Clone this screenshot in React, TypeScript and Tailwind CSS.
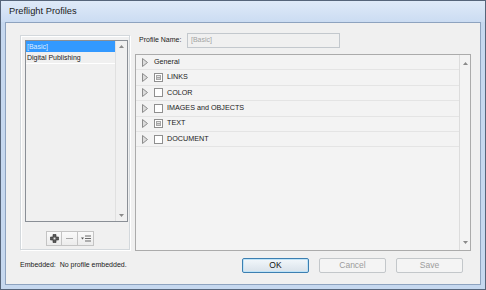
import React from 'react';

function Tri() {
  return (
    <svg width="6" height="9" viewBox="0 0 6 9" className="shrink-0">
      <polygon points="0.5,0.5 5.5,4.5 0.5,8.5" fill="#dcdcdc" stroke="#8c8c8c" strokeWidth="1" />
    </svg>
  );
}

function Check({ mixed }: { mixed: boolean }) {
  return (
    <span className="w-[9px] h-[9px] border border-[#8f8f8f] bg-white shrink-0 flex items-center justify-center">
      {mixed && (
        <svg width="5" height="5" viewBox="0 0 5 5">
          <rect x="0" y="0" width="5" height="5" fill="#a6a6a6" />
          <rect x="1" y="1" width="3" height="1" fill="#e6e6e6" />
          <rect x="1" y="3" width="3" height="1" fill="#d0d0d0" />
        </svg>
      )}
    </span>
  );
}

function Arrow({ up }: { up: boolean }) {
  return (
    <svg width="5" height="3" viewBox="0 0 5 3">
      <polygon points={up ? '0,3 2.5,0 5,3' : '0,0 2.5,3 5,0'} fill="#8a8a8a" />
    </svg>
  );
}

export default function App() {
  const rows: { label: string; cb: null | 'mixed' | 'empty' }[] = [
    { label: 'General', cb: null },
    { label: 'LINKS', cb: 'mixed' },
    { label: 'COLOR', cb: 'empty' },
    { label: 'IMAGES and OBJECTS', cb: 'empty' },
    { label: 'TEXT', cb: 'mixed' },
    { label: 'DOCUMENT', cb: 'empty' },
  ];
  return (
    <div className="w-[486px] h-[290px] bg-[#c6d8ef] border border-[#56657a] flex flex-col overflow-hidden font-['Liberation_Sans',Arial,sans-serif] text-[#1a1a1a]">
      <div className="h-[21px] shrink-0 bg-gradient-to-b from-[#dfeaf8] to-[#cbdcf2] flex items-center pl-[8px] text-[9.3px] text-[#1c1c1c]">
        Preflight Profiles
      </div>
      <div className="flex-1 mx-[4px] mb-[4px] border border-[#8ea3bf] bg-[#f0f0f0] flex flex-col">
        <div className="flex pt-[10px] pl-[14px]">
          {/* left group */}
          <div className="mt-[2px] w-[110px] h-[215px] border border-[#d3d8dc] shadow-[inset_1px_1px_0_#ffffff,1px_1px_0_#ffffff] pt-[4px] pl-[4px] flex flex-col">
            <div className="w-[103px] h-[182px] border border-[#8a8f96] bg-[#f0f0f0] flex">
              <div className="flex-1 flex flex-col text-[7px]">
                <div className="h-[11px] bg-[#3399ff] text-[#dcecff] leading-[11px] pl-[1px]">[Basic]</div>
                <div className="h-[12px] leading-[12px] pl-[1px] border-b border-[#ffffff]">Digital Publishing</div>
              </div>
              <div className="w-[12px] border-l border-[#e0e0e0] flex flex-col justify-between items-center py-[4px]">
                <Arrow up />
                <Arrow up={false} />
              </div>
            </div>
            <div className="mt-[9px] ml-[21px] flex">
              <div className="w-[16px] h-[15px] border border-[#c4c4c4] bg-gradient-to-b from-[#fafafa] to-[#ececec] flex items-center justify-center">
                <svg width="9" height="9" viewBox="0 0 9 9">
                  <path d="M3 0.5h3v2.5h2.5v3H6v2.5H3V6H0.5V3H3z" fill="#5a5a5a" stroke="#2e2e2e" strokeWidth="0.6" />
                  <rect x="3.6" y="3.6" width="1.8" height="1.8" fill="#e8e8e8" />
                </svg>
              </div>
              <div className="-ml-px w-[17px] h-[15px] border border-[#c4c4c4] bg-gradient-to-b from-[#fafafa] to-[#ececec] flex items-center justify-center">
                <span className="w-[7px] h-[1px] bg-[#a8a8a8]" />
              </div>
              <div className="-ml-px w-[17px] h-[15px] border border-[#c4c4c4] bg-gradient-to-b from-[#fafafa] to-[#ececec] flex items-center justify-center">
                <svg width="10" height="7" viewBox="0 0 10 7">
                  <polygon points="0,2.5 3,2.5 1.5,4.5" fill="#555" />
                  <rect x="4" y="0.5" width="6" height="1" fill="#6a6a6a" />
                  <rect x="4" y="3" width="6" height="1" fill="#6a6a6a" />
                  <rect x="4" y="5.5" width="6" height="1" fill="#6a6a6a" />
                </svg>
              </div>
            </div>
          </div>
          {/* right column */}
          <div className="ml-[5px] w-[336px] flex flex-col">
            <div className="h-[15px] flex items-center">
              <span className="w-[52px] pl-[4px] text-[7px]">Profile Name:</span>
              <div className="w-[153px] h-[15px] border border-[#c3c8cd] bg-[#f0f0f0] text-[7px] text-[#a3a3a3] pl-[3px] flex items-center">
                [Basic]
              </div>
            </div>
            <div className="mt-[6px] h-[197px] border border-[#ababab] bg-[#f3f3f3] flex">
              <div className="flex-1 flex flex-col">
                {rows.map((r) => (
                  <div key={r.label} className="h-[15.4px] border-b border-[#e4e4e4] flex items-center pl-[6px] text-[7.2px]">
                    <Tri />
                    <span className="ml-[6px] flex items-center">
                      {r.cb ? (
                        <>
                          <Check mixed={r.cb === 'mixed'} />
                          <span className="ml-[4px]">{r.label}</span>
                        </>
                      ) : (
                        <span>{r.label}</span>
                      )}
                    </span>
                  </div>
                ))}
              </div>
              <div className="w-[11px] border-l border-[#dcdcdc] flex flex-col justify-between items-center pt-[7px] pb-[6px]">
                <Arrow up />
                <Arrow up={false} />
              </div>
            </div>
          </div>
        </div>
        <div className="mt-[7px] h-[15px] flex items-center pl-[14px]">
          <span className="text-[7px]">Embedded:&nbsp; No profile embedded.</span>
          <div className="ml-auto mr-[17px] flex gap-[10px]">
            <div className="w-[67px] h-[15px] rounded-[2px] border border-[#3c7fb1] bg-gradient-to-b from-[#f2f7fb] to-[#d9e2ea] shadow-[inset_0_0_0_1px_#bfe3f7] flex items-center justify-center text-[8.5px] text-[#111]">
              OK
            </div>
            <div className="w-[67px] h-[15px] rounded-[2px] border border-[#c3c7ca] bg-[#f4f4f4] flex items-center justify-center text-[8.5px] text-[#9c9c9c]">
              Cancel
            </div>
            <div className="w-[67px] h-[15px] rounded-[2px] border border-[#c3c7ca] bg-[#f4f4f4] flex items-center justify-center text-[8.5px] text-[#9c9c9c]">
              Save
            </div>
          </div>
        </div>
      </div>
    </div>
  );
}
